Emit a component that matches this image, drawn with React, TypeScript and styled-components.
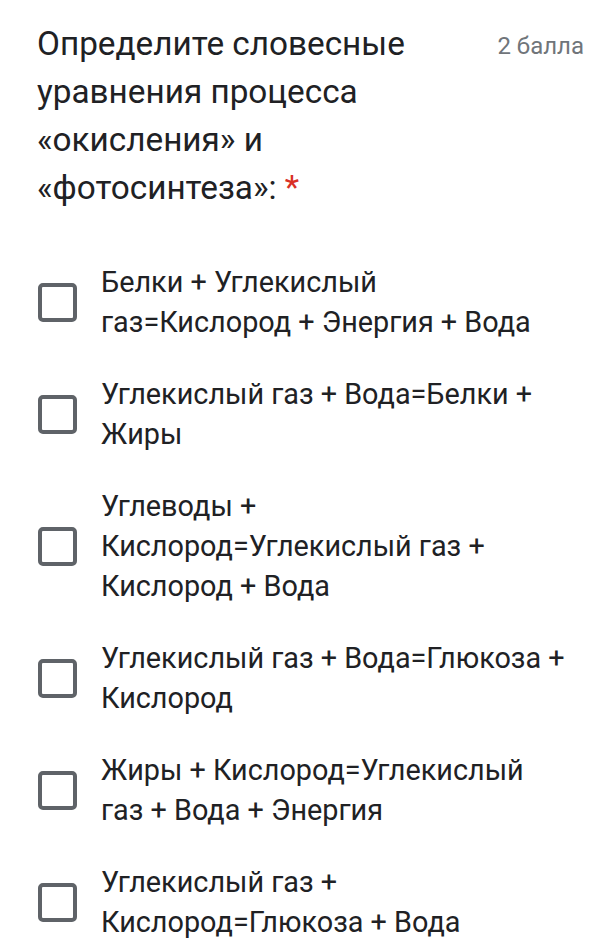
import React from "react";
import styled, { createGlobalStyle } from "styled-components";

const Global = createGlobalStyle`
  html, body { margin: 0; padding: 0; background: #ffffff; }
  body { font-family: Roboto, "Liberation Sans", sans-serif; }
`;

const Card = styled.div`
  width: 591px;
  box-sizing: border-box;
  padding: 20px 7px 0 37px;
`;

const Header = styled.div`
  display: flex;
  justify-content: space-between;
  align-items: flex-start;
`;

const Title = styled.div`
  width: 420px;
  font-family: Roboto, "Liberation Sans", sans-serif;
  font-size: 33.3px;
  line-height: 48px;
  color: #202124;
`;

const Star = styled.span`
  color: #d93025;
  margin-left: 8px;
`;

const Points = styled.div`
  font-size: 24px;
  line-height: 28px;
  color: #70757a;
  margin-top: 12px;
`;

const List = styled.div`
  display: flex;
  flex-direction: column;
  gap: 32px;
  margin-top: 50px;
`;

const Option = styled.label`
  display: flex;
  align-items: center;
  gap: 24px;
`;

const Box = styled.span`
  flex: none;
  width: 31px;
  height: 31px;
  border: 4px solid #5f6368;
  border-radius: 5px;
  margin-left: 1px;
`;

const Text = styled.span`
  width: 466px;
  font-size: 28.8px;
  line-height: 40px;
  color: #202124;
`;

const options = [
  "Белки + Углекислый газ=Кислород + Энергия + Вода",
  "Углекислый газ + Вода=Белки + Жиры",
  "Углеводы + Кислород=Углекислый газ + Кислород + Вода",
  "Углекислый газ + Вода=Глюкоза + Кислород",
  "Жиры + Кислород=Углекислый газ + Вода + Энергия",
  "Углекислый газ + Кислород=Глюкоза + Вода",
];

export default function App() {
  return (
    <>
      <Global />
      <Card>
        <Header>
          <Title>
            Определите словесные уравнения процесса «окисления» и «фотосинтеза»:
            <Star>*</Star>
          </Title>
          <Points>2 балла</Points>
        </Header>
        <List>
          {options.map((o) => (
            <Option key={o}>
              <Box />
              <Text>{o}</Text>
            </Option>
          ))}
        </List>
      </Card>
    </>
  );
}
